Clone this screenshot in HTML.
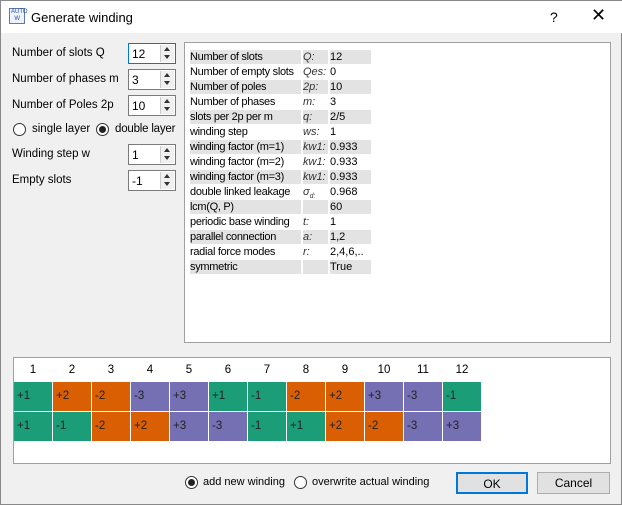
<!DOCTYPE html><html><head><style>
*{box-sizing:border-box;margin:0;padding:0}
body{width:622px;height:505px;background:#f0f0f0;font-family:"Liberation Sans",sans-serif;font-size:11.5px;color:#000;position:relative;overflow:hidden;border:1px solid #888}
.a{position:absolute;white-space:nowrap}
.title{position:absolute;left:0;top:0;width:622px;height:32px;background:#fff}
.spin{position:absolute;width:48px;height:21px;background:#fff;border:1px solid #7a7a7a}
.spin span{position:absolute;left:3px;top:3px;font-size:12px}
.spin .b{position:absolute;right:1px;top:1px;width:14px;height:17px;border-left:1px solid #ccc;background:#f0f0f0}
.spin .b:before{content:"";position:absolute;left:3px;top:2px;border:3px solid transparent;border-bottom:4px solid #333;border-top:0}
.spin .b:after{content:"";position:absolute;left:3px;top:10px;border:3px solid transparent;border-top:4px solid #333;border-bottom:0}
.radio{position:absolute;width:13px;height:13px;border:1px solid #333;border-radius:50%;background:#fff}
.radio.on:after{content:"";position:absolute;left:2px;top:2px;width:7px;height:7px;border-radius:50%;background:#222}
.info{position:absolute;left:183px;top:41px;width:427px;height:301px;background:#fff;border:1px solid #a0a0a0}
.r{position:absolute;left:5px;height:15px;font-size:11px;line-height:15px;white-space:nowrap}
.r div{position:absolute;top:0;height:14px;white-space:nowrap}
.c1{left:0;width:111px;letter-spacing:-0.3px}.c2{left:113px;width:25px;font-style:italic;color:#333}.c3{left:140px;width:41px}
.g div{background:#e3e3e3}
.tbl{position:absolute;left:12px;top:356px;width:598px;height:107px;background:#fff;border:1px solid #a0a0a0}
.cell{position:absolute;width:38px;font-size:11.5px;color:#222}
.btn{position:absolute;height:22px;background:#e1e1e1;border:1px solid #adadad;text-align:center;line-height:20px;font-size:12px}
</style></head><body>
<div class="title"></div>
<div class="a" style="left:8px;top:7px;width:16px;height:16px;border:1px solid #5a7ab0;background:#eef3fb;font-size:6px;color:#2a4f9a;line-height:7px;padding-left:1px">AUTO<br>&nbsp;&nbsp;W</div>
<div class="a" style="left:30px;top:9px;font-size:13px">Generate winding</div>
<div class="a" style="left:549px;top:8px;font-size:14px">?</div>
<div class="a" style="left:590px;top:4px;font-size:18px;font-weight:300">✕</div>

<div class="a" style="left:11px;top:46px">Number of slots Q</div>
<div class="spin" style="left:127px;top:42px;border-color:#0078d7"><span>12</span><div class="b"></div></div>
<div class="a" style="left:11px;top:72px">Number of phases m</div>
<div class="spin" style="left:127px;top:68px"><span>3</span><div class="b"></div></div>
<div class="a" style="left:11px;top:98px">Number of Poles 2p</div>
<div class="spin" style="left:127px;top:94px"><span>10</span><div class="b"></div></div>
<div class="radio" style="left:12px;top:122px"></div><div class="a" style="left:31px;top:122px">single layer</div>
<div class="radio on" style="left:95px;top:122px"></div><div class="a" style="left:114px;top:122px;letter-spacing:-0.2px">double layer</div>
<div class="a" style="left:11px;top:147px">Winding step w</div>
<div class="spin" style="left:127px;top:143px"><span>1</span><div class="b"></div></div>
<div class="a" style="left:11px;top:173px">Empty slots</div>
<div class="spin" style="left:127px;top:169px"><span>-1</span><div class="b"></div></div>

<div class="info">
<div class="r g" style="top:7px"><div class="c1">Number of slots</div><div class="c2">Q:</div><div class="c3">12</div></div>
<div class="r" style="top:22px"><div class="c1">Number of empty slots</div><div class="c2">Qes:</div><div class="c3">0</div></div>
<div class="r g" style="top:37px"><div class="c1">Number of poles</div><div class="c2">2p:</div><div class="c3">10</div></div>
<div class="r" style="top:52px"><div class="c1">Number of phases</div><div class="c2">m:</div><div class="c3">3</div></div>
<div class="r g" style="top:67px"><div class="c1">slots per 2p per m</div><div class="c2">q:</div><div class="c3">2/5</div></div>
<div class="r" style="top:82px"><div class="c1">winding step</div><div class="c2">ws:</div><div class="c3">1</div></div>
<div class="r g" style="top:97px"><div class="c1">winding factor (m=1)</div><div class="c2">kw1:</div><div class="c3">0.933</div></div>
<div class="r" style="top:112px"><div class="c1">winding factor (m=2)</div><div class="c2">kw1:</div><div class="c3">0.933</div></div>
<div class="r g" style="top:127px"><div class="c1">winding factor (m=3)</div><div class="c2">kw1:</div><div class="c3">0.933</div></div>
<div class="r" style="top:142px"><div class="c1">double linked leakage</div><div class="c2">σ<sub style="font-size:7px">d:</sub></div><div class="c3">0.968</div></div>
<div class="r g" style="top:157px"><div class="c1">lcm(Q, P)</div><div class="c2"></div><div class="c3">60</div></div>
<div class="r" style="top:172px"><div class="c1">periodic base winding</div><div class="c2">t:</div><div class="c3">1</div></div>
<div class="r g" style="top:187px"><div class="c1">parallel connection</div><div class="c2">a:</div><div class="c3">1,2</div></div>
<div class="r" style="top:202px"><div class="c1">radial force modes</div><div class="c2">r:</div><div class="c3">2,4,6,..</div></div>
<div class="r g" style="top:217px"><div class="c1">symmetric</div><div class="c2"></div><div class="c3">True</div></div>
</div>

<div class="tbl" id="t"></div>
<script>
var G="#1b9e77",O="#d95f02",P="#7570b3";
var r1=[["+1",G],["+2",O],["-2",O],["-3",P],["+3",P],["+1",G],["-1",G],["-2",O],["+2",O],["+3",P],["-3",P],["-1",G]];
var r2=[["+1",G],["-1",G],["-2",O],["+2",O],["+3",P],["-3",P],["-1",G],["+1",G],["+2",O],["-2",O],["-3",P],["+3",P]];
var h="";
for(var i=0;i<12;i++){var x=i*39;
h+='<div class="cell" style="left:'+x+'px;top:1px;height:23px;line-height:23px;text-align:center;color:#000">'+(i+1)+'</div>';
h+='<div class="cell" style="left:'+x+'px;top:24px;height:29px;line-height:29px;padding-left:3px;background:'+r1[i][1]+'">'+r1[i][0]+'</div>';
h+='<div class="cell" style="left:'+x+'px;top:54px;height:29px;line-height:29px;padding-left:3px;background:'+r2[i][1]+'">'+r2[i][0]+'</div>';}
document.getElementById("t").innerHTML=h;
</script>

<div class="radio on" style="left:184px;top:475px"></div><div class="a" style="left:202px;top:475px;font-size:11px">add new winding</div>
<div class="radio" style="left:293px;top:475px"></div><div class="a" style="left:311px;top:475px;font-size:11px">overwrite actual winding</div>
<div class="btn" style="left:455px;top:471px;width:72px;border:2px solid #0078d7">OK</div>
<div class="btn" style="left:536px;top:471px;width:73px">Cancel</div>
</body></html>
